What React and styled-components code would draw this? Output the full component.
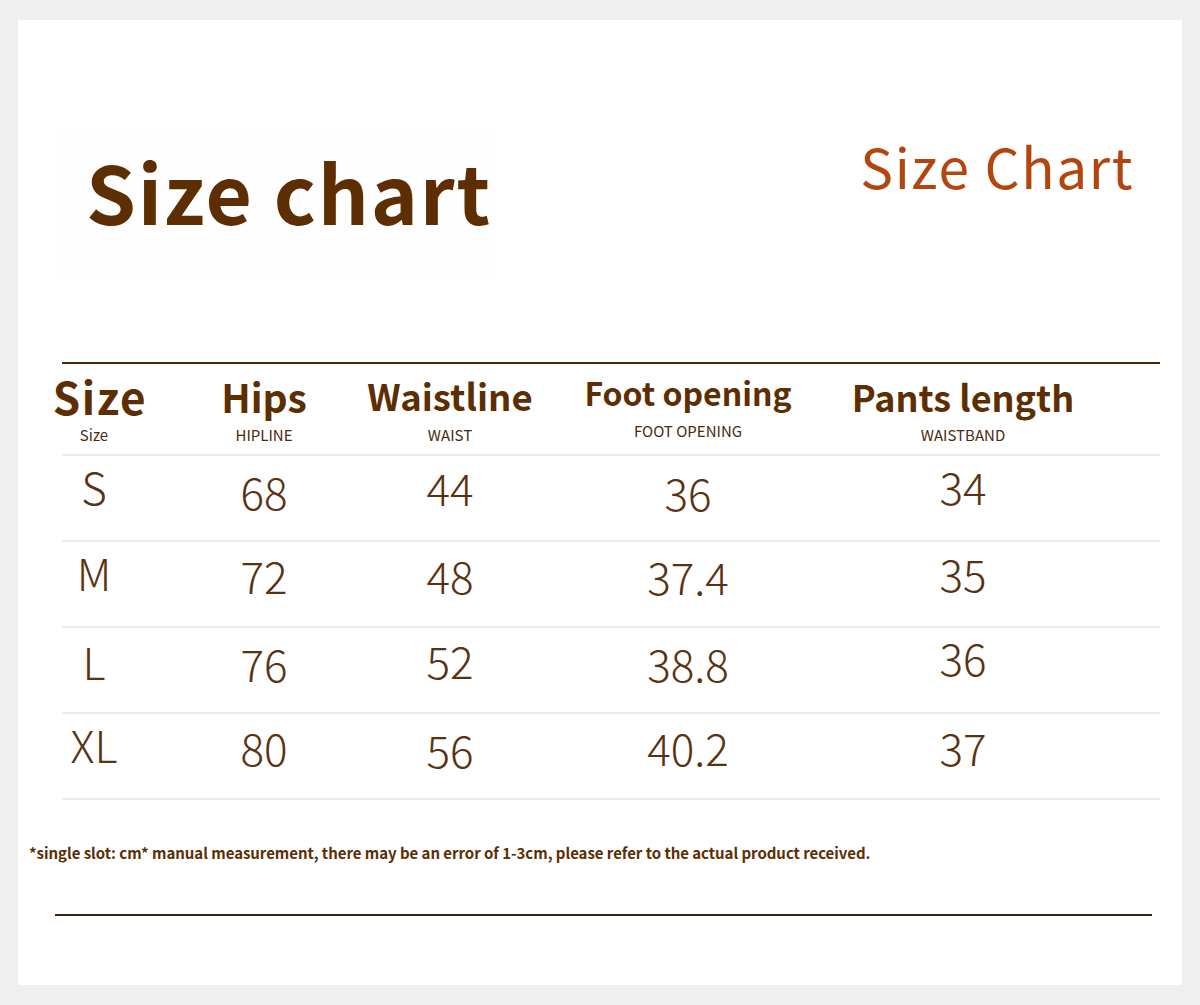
import React from "react";
import styled, { createGlobalStyle } from "styled-components";

const Global = createGlobalStyle`
  html, body { margin: 0; padding: 0; background: #efefef; }
  body { font-family: "Noto Sans CJK SC", "Noto Sans", sans-serif; }
`;

const Page = styled.div`
  width: 1200px;
  height: 1005px;
  box-sizing: border-box;
  padding: 20px 18px 20px 18px;
`;

const Card = styled.div`
  background: #ffffff;
  height: 965px;
  box-sizing: border-box;
  display: flex;
  flex-direction: column;
`;

const Header = styled.div`
  display: flex;
  justify-content: space-between;
  align-items: flex-start;
  height: 342px;
`;

const TitleBox = styled.div`
  margin: 108px 0 0 37px;
  width: 440px;
  height: 150px;
  background: #fefefe;
  box-sizing: border-box;
  padding: 12px 0 0 31px;
`;

const BigTitle = styled.h1`
  margin: 0;
  font-family: "Noto Sans CJK SC", sans-serif;
  font-weight: 700;
  font-size: 80px;
  line-height: 100px;
  color: #5c2e02;
  letter-spacing: 1.8px;
`;

const SubTitle = styled.h2`
  margin: 110px 48px 0 0;
  font-family: "Noto Sans CJK SC", sans-serif;
  font-weight: 400;
  font-size: 55px;
  line-height: 70px;
  color: #b3450e;
  letter-spacing: 1.6px;
`;

const Table = styled.div`
  margin-left: 44px;
  width: 1098px;
  border-top: 2px solid #4a2608;
`;

const cols = "64px 276px 96px 380px 170px 1fr";

const HeadRow = styled.div`
  display: grid;
  grid-template-columns: ${cols};
  height: 90px;
  border-bottom: 2px solid #ebebeb;
`;

const Row = styled.div`
  display: grid;
  grid-template-columns: ${cols};
  height: 84px;
  border-bottom: 2px solid #ebebeb;
`;

const Cell = styled.div`
  display: flex;
  flex-direction: column;
  align-items: center;
  white-space: nowrap;
`;

const HeadMain = styled.div`
  font-family: "Noto Sans CJK SC", sans-serif;
  font-weight: 700;
  font-size: ${(p) => p.$size || 40}px;
  line-height: 1;
  height: 44px;
  display: flex;
  align-items: center;
  color: #5c2e02;
  margin-top: ${(p) => p.$top || 10}px;
  letter-spacing: ${(p) => p.$ls || 0}px;
  transform: translateX(${(p) => p.$dx || 0}px);
`;

const HeadSub = styled.div`
  font-family: "Noto Sans CJK SC", sans-serif;
  font-weight: 400;
  font-size: 15px;
  line-height: 1;
  color: #4a2a0e;
  margin-top: 9px;
`;

const Value = styled.div`
  font-family: "Noto Sans CJK SC", sans-serif;
  font-weight: 300;
  font-size: 44px;
  line-height: 1;
  color: #5a3210;
  margin-top: ${(p) => p.$top || 13}px;
`;

const Note = styled.p`
  margin: 44px 0 0 11px;
  font-family: "Noto Sans CJK SC", sans-serif;
  font-weight: 700;
  font-size: 15px;
  line-height: 18px;
  color: #5c2e02;
  letter-spacing: -0.04px;
`;

const BottomRule = styled.div`
  margin: 52px 0 0 37px;
  width: 1097px;
  height: 2px;
  background: #3d2311;
`;

const headers = [
  { main: "Size", sub: "Size", size: 44, dx: 6, ls: 1.5, top: 10 },
  { main: "Hips", sub: "HIPLINE", size: 39 },
  { main: "Waistline", sub: "WAIST", size: 36.5 },
  { main: "Foot opening", sub: "FOOT OPENING", size: 32, top: 6 },
  { main: "Pants length", sub: "WAISTBAND", size: 36 },
];

const rows = [
  { v: ["S", "68", "44", "36", "34"], t: [8, 13, 9, 14, 8] },
  { v: ["M", "72", "48", "37.4", "35"], t: [8, 11, 11, 12, 9] },
  { v: ["L", "76", "52", "38.8", "36"], t: [11, 13, 10, 13, 7] },
  { v: ["XL", "80", "56", "40.2", "37"], t: [8, 11, 13, 11, 11] },
];

export default function App() {
  return (
    <>
      <Global />
      <Page>
        <Card>
          <Header>
            <TitleBox>
              <BigTitle>Size chart</BigTitle>
            </TitleBox>
            <SubTitle>Size Chart</SubTitle>
          </Header>
          <Table>
            <HeadRow>
              {headers.map((h) => (
                <Cell key={h.main}>
                  <HeadMain $size={h.size} $top={h.top} $dx={h.dx} $ls={h.ls}>
                    {h.main}
                  </HeadMain>
                  <HeadSub>{h.sub}</HeadSub>
                </Cell>
              ))}
            </HeadRow>
            {rows.map((r) => (
              <Row key={r.v[0]}>
                {r.v.map((val, i) => (
                  <Cell key={i}>
                    <Value $top={r.t[i]}>{val}</Value>
                  </Cell>
                ))}
              </Row>
            ))}
          </Table>
          <Note>
            *single slot: cm* manual measurement, there may be an error of 1-3cm,
            please refer to the actual product received.
          </Note>
          <BottomRule />
        </Card>
      </Page>
    </>
  );
}
